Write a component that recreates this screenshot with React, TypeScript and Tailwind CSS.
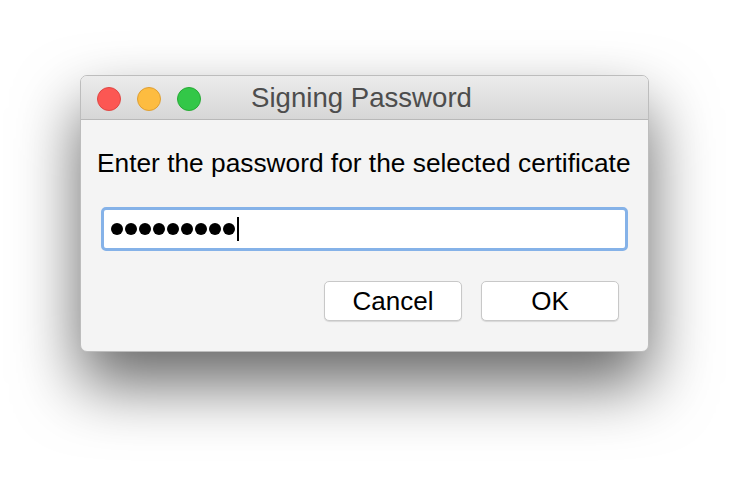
export default function App() {
  const dots = [0, 1, 2, 3, 4, 5, 6, 7, 8]
  return (
    <div className="w-[744px] h-[482px] bg-white pl-[80px] pt-[75px] overflow-hidden" style={{ fontFamily: '"Liberation Sans", Arial, sans-serif' }}>
      <div className="w-[569px] h-[277px] rounded-[7px] bg-[#f4f4f4] border border-[#bdbdbd] shadow-[0_32px_64px_rgba(0,0,0,0.6)] flex flex-col overflow-hidden">
        <div className="relative h-[44px] flex items-center justify-center bg-gradient-to-b from-[#ececec] to-[#d6d6d6] border-b border-[#b8b8b8]">
          <div className="absolute left-[16px] top-[11px] flex gap-[16px]">
            <span className="w-[24px] h-[24px] rounded-full bg-[#fc5753] border border-[#df4744]" />
            <span className="w-[24px] h-[24px] rounded-full bg-[#fdbc40] border border-[#de9f34]" />
            <span className="w-[24px] h-[24px] rounded-full bg-[#33c748] border border-[#27aa35]" />
          </div>
          <span className="text-[27.6px] leading-[30px] text-[#4d4d4d] ml-[-6px]">Signing Password</span>
        </div>
        <div className="flex flex-col px-[20px]">
          <p className="text-[26.3px] text-black mt-[28px] ml-[-4px] leading-[30px] whitespace-nowrap">Enter the password for the selected certificate</p>
          <div className="mt-[29px] h-[44px] rounded-[5px] border-[3px] border-[#85b2e8] bg-white flex items-center pl-[7px]">
            <div className="flex gap-[2px]">
              {dots.map(d => (
                <span key={d} className="w-[12px] h-[12px] rounded-full bg-black" />
              ))}
            </div>
            <span className="w-[2px] h-[24px] bg-black ml-[2px]" />
          </div>
          <div className="flex justify-end gap-[19px] mt-[30px] mr-[9px]">
            <button className="w-[138px] h-[40px] rounded-[5px] bg-white border border-[#c8c8c8] shadow-[0_1px_1px_rgba(0,0,0,0.12)] text-[26px] leading-none text-black">Cancel</button>
            <button className="w-[138px] h-[40px] rounded-[5px] bg-white border border-[#c8c8c8] shadow-[0_1px_1px_rgba(0,0,0,0.12)] text-[26px] leading-none text-black">OK</button>
          </div>
        </div>
      </div>
    </div>
  )
}
